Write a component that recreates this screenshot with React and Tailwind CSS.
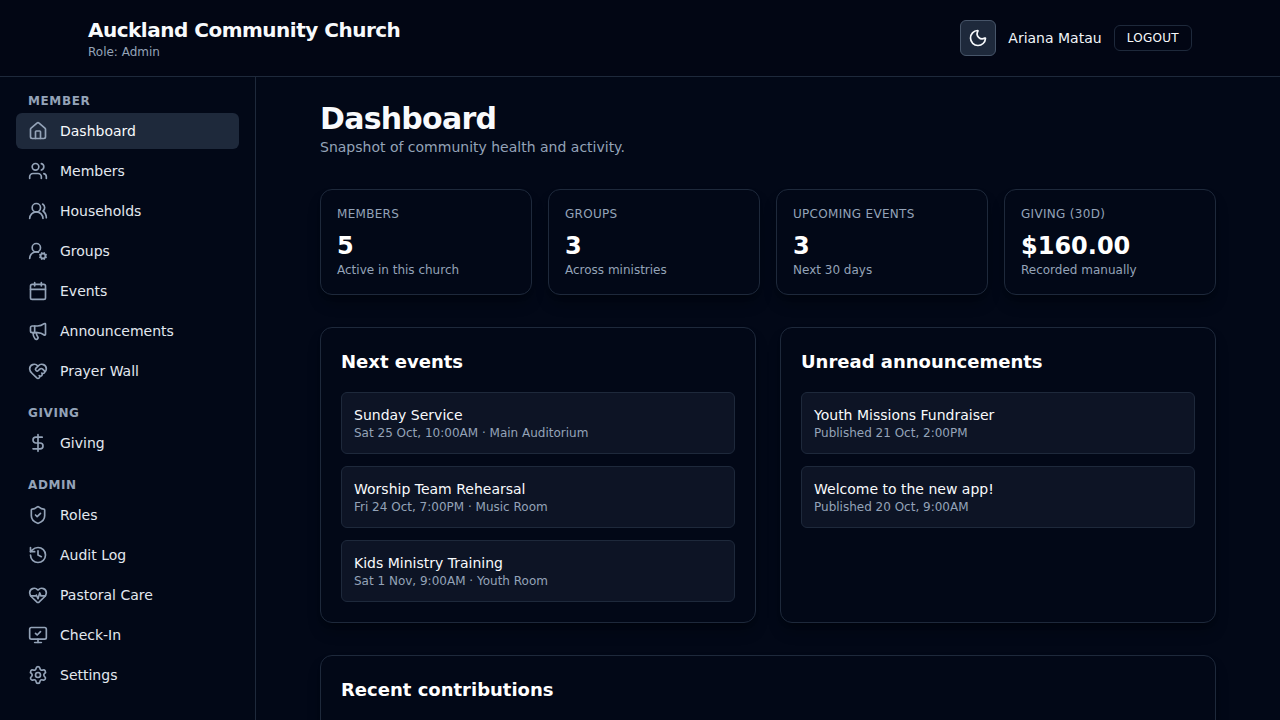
import {
  Calendar,
  DollarSign,
  HeartHandshake,
  HeartPulse,
  History,
  House,
  Megaphone,
  MonitorCheck,
  Moon,
  Settings,
  ShieldCheck,
  UserRoundCog,
  Users,
  UsersRound,
} from "lucide-react";

const sections = [
  {
    title: "Member",
    items: [
      { label: "Dashboard", icon: House, active: true },
      { label: "Members", icon: Users },
      { label: "Households", icon: UsersRound },
      { label: "Groups", icon: UserRoundCog },
      { label: "Events", icon: Calendar },
      { label: "Announcements", icon: Megaphone },
      { label: "Prayer Wall", icon: HeartHandshake },
    ],
  },
  { title: "Giving", items: [{ label: "Giving", icon: DollarSign }] },
  {
    title: "Admin",
    items: [
      { label: "Roles", icon: ShieldCheck },
      { label: "Audit Log", icon: History },
      { label: "Pastoral Care", icon: HeartPulse },
      { label: "Check-In", icon: MonitorCheck },
      { label: "Settings", icon: Settings },
    ],
  },
];

const stats = [
  { label: "Members", value: "5", note: "Active in this church" },
  { label: "Groups", value: "3", note: "Across ministries" },
  { label: "Upcoming events", value: "3", note: "Next 30 days" },
  { label: "Giving (30d)", value: "$160.00", note: "Recorded manually" },
];

const events = [
  { title: "Sunday Service", detail: "Sat 25 Oct, 10:00AM · Main Auditorium" },
  { title: "Worship Team Rehearsal", detail: "Fri 24 Oct, 7:00PM · Music Room" },
  { title: "Kids Ministry Training", detail: "Sat 1 Nov, 9:00AM · Youth Room" },
];

const announcements = [
  { title: "Youth Missions Fundraiser", detail: "Published 21 Oct, 2:00PM" },
  { title: "Welcome to the new app!", detail: "Published 20 Oct, 9:00AM" },
];

function Header() {
  return (
    <header className="shrink-0 border-b border-[#1e293b] bg-[#020614] backdrop-blur">
      <div className="mx-auto flex max-w-6xl items-center justify-between px-6 py-4">
        <div>
          <p className="text-xl font-semibold tracking-tight text-[#f8fafc]">Auckland Community Church</p>
          <p className="text-xs text-[#94a3b8]">Role: Admin</p>
        </div>
        <div className="flex items-center gap-3">
          <button
            aria-label="Toggle theme"
            className="flex size-9 items-center justify-center rounded-md border border-[#475569] bg-[#1e293b] text-[#f8fafc]"
          >
            <Moon size={20} />
          </button>
          <span className="text-sm text-[#f1f5f9]">Ariana Matau</span>
          <button className="rounded-md border border-[#1e293b] px-3 py-1 text-xs tracking-wide text-[#f8fafc] uppercase">
            Logout
          </button>
        </div>
      </div>
    </header>
  );
}

function Sidebar() {
  return (
    <aside className="w-64 shrink-0 border-r border-[#1e293b] p-4">
      <nav className="flex flex-col gap-4">
        {sections.map((section) => (
          <div key={section.title} className="flex flex-col gap-1">
            <p className="px-3 text-xs font-semibold tracking-wider text-[#94a3b8] uppercase">{section.title}</p>
            {section.items.map(({ label, icon: Icon, active }) => (
              <a
                key={label}
                className={
                  active
                    ? "flex items-center gap-3 rounded-md bg-[#1e293b] px-3 py-2 text-sm text-[#f8fafc]"
                    : "flex items-center gap-3 rounded-md px-3 py-2 text-sm text-[#e2e8f0]"
                }
              >
                <Icon size={20} className="shrink-0 text-[#94a3b8]" />
                {label}
              </a>
            ))}
          </div>
        ))}
      </nav>
    </aside>
  );
}

function Panel({ title, items }) {
  return (
    <section className="rounded-xl border border-[#1e293b] bg-[#020817] p-5 shadow-lg shadow-black/30">
      <h2 className="text-lg font-semibold text-white">{title}</h2>
      <ul className="mt-4 flex flex-col gap-3">
        {items.map((item) => (
          <li key={item.title} className="rounded-md border border-[#1e293b] bg-[#0d1425] p-3">
            <p className="text-sm text-[#f8fafc]">{item.title}</p>
            <p className="text-xs text-[#94a3b8]">{item.detail}</p>
          </li>
        ))}
      </ul>
    </section>
  );
}

export default function App() {
  return (
    <div className="flex h-screen flex-col overflow-hidden bg-[#020817] font-['DejaVu_Sans',sans-serif] text-[#f8fafc]">
      <Header />
      <div className="flex min-h-0 flex-1">
        <Sidebar />
        <main className="flex min-w-0 flex-1 flex-col gap-8 overflow-hidden px-16 pt-6">
          <div className="shrink-0">
            <h1 className="text-3xl font-semibold tracking-tight">Dashboard</h1>
            <p className="text-sm text-[#94a3b8]">Snapshot of community health and activity.</p>
          </div>
          <div className="grid shrink-0 grid-cols-4 gap-4">
            {stats.map((stat) => (
              <div
                key={stat.label}
                className="rounded-xl border border-[#1e293b] bg-[#020817] p-4 shadow-lg shadow-black/30"
              >
                <p className="text-xs tracking-wide text-[#94a3b8] uppercase">{stat.label}</p>
                <p className="mt-2 text-2xl font-semibold text-white">{stat.value}</p>
                <p className="text-xs text-[#94a3b8]">{stat.note}</p>
              </div>
            ))}
          </div>
          <div className="grid shrink-0 grid-cols-2 gap-6">
            <Panel title="Next events" items={events} />
            <Panel title="Unread announcements" items={announcements} />
          </div>
          <div className="shrink-0">
            <Panel title="Recent contributions" items={[]} />
          </div>
        </main>
      </div>
    </div>
  );
}
